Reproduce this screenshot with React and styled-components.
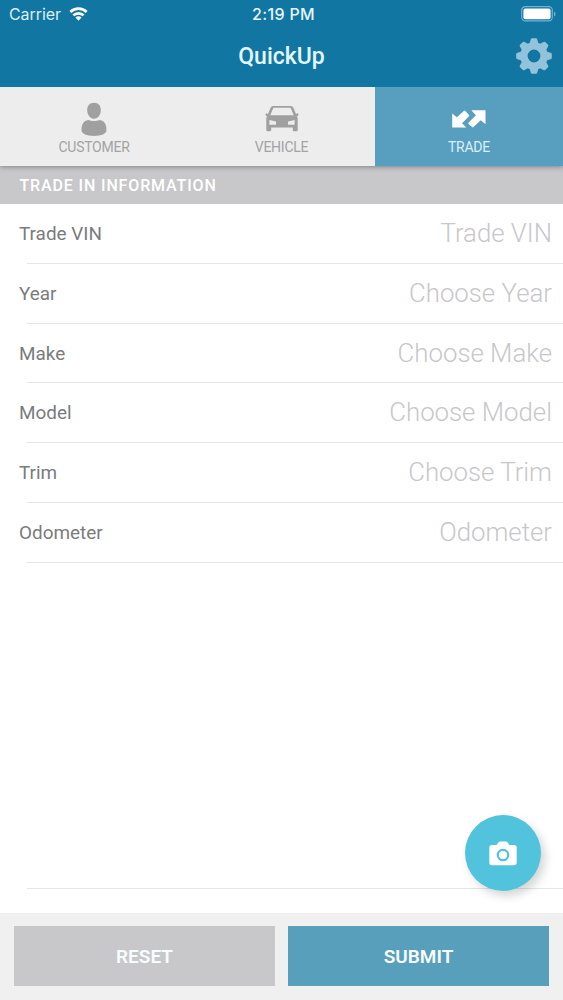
import styled, { createGlobalStyle } from "styled-components";

const fields = [
  { label: "Trade VIN", placeholder: "Trade VIN" },
  { label: "Year", placeholder: "Choose Year" },
  { label: "Make", placeholder: "Choose Make" },
  { label: "Model", placeholder: "Choose Model" },
  { label: "Trim", placeholder: "Choose Trim" },
  { label: "Odometer", placeholder: "Odometer" },
];

const WifiIcon = () => (
  <svg width="19" height="14" viewBox="0 0 20 15" fill="none" stroke="#fff" strokeWidth="2.9">
    <path d="M1.3 5.4a12.4 12.4 0 0 1 17.4 0" />
    <path d="M4.5 9a7.8 7.8 0 0 1 11 0" />
    <path d="M10 14.600 6.700 11.300a4.600 4.600 0 0 1 6.600 0z" fill="#fff" stroke="none" />
  </svg>
);

const BatteryIcon = () => (
  <svg width="35" height="16" viewBox="0 0 35 16">
    <rect x="0.7" y="0.7" width="30.6" height="14.2" rx="3.6" fill="none" stroke="#74b2d0" strokeWidth="1.2" />
    <rect x="2.4" y="2.4" width="27.2" height="10.8" rx="2" fill="#fff" />
    <path d="M33 5.4c2 .9 2 4.1 0 5z" fill="#74b2d0" />
  </svg>
);

const GearIcon = () => (
  <svg width="36" height="36" viewBox="-18 -18 36 36">
    <g fill="#92c3da">
      {[0, 45, 90, 135, 180, 225, 270, 315].map((angle) => (
        <path
          key={angle}
          transform={`rotate(${angle})`}
          d="M-4.7-11.5-3.3-16.6Q-3-17.8-2-17.8H2Q3-17.8 3.3-16.6L4.7-11.5z"
        />
      ))}
      <circle r="10.1" fill="none" stroke="#92c3da" strokeWidth="7.4" />
    </g>
  </svg>
);

const PersonIcon = () => (
  <svg width="26" height="34" viewBox="0 0 26 34" fill="#a0a0a1">
    <path d="M13 .8c4.200 0 6.800 2.800 6.800 7.300 0 4.800-2.900 8.700-6.800 8.700S6.200 12.900 6.200 8.100C6.200 3.600 8.800.8 13 .8z" />
    <path d="M7.500 17.900c3 1.500 8 1.500 11 0 5.300.5 7.300 5.300 6.900 10.700C25.200 31.800 20.500 34 13 34S.8 31.800.6 28.600C.2 23.200 2.200 18.400 7.500 17.900z" />
  </svg>
);

const CarIcon = () => (
  <svg width="34" height="26" viewBox="0 0 34 26" fill="#a0a0a1">
    <path
      fillRule="evenodd"
      d="M8.200 0h17.600q1.900 0 2.600 1.800L31 8l1.600-.8q1 .1.900 1.600-.1 1.500-1.600 1.400l.8 1.700V24q0 1.300-1.300 1.300h-2.300q-1.300 0-1.300-1.300v-2.400H6.200V24q0 1.300-1.300 1.300H2.600Q1.300 25.300 1.300 24V11.900l.8-1.700Q.6 10.300.5 8.800.4 7.300 1.400 7.200L3 8l2.600-6.200Q6.300 0 8.200 0zM8.400 1.700 5.300 9.300h23.400l-3.100-7.600zM4.400 14v4.800h6.600v-3.200zM29.600 14l-6.600 1.600v3.200h6.600z"
    />
  </svg>
);

const TradeIcon = () => (
  <svg width="34" height="18" viewBox="0 0 34 18" fill="#fff">
    <path d="M.2 3.500 4.800 7.300 11.800.9q.8-.6 1.500 0L17 4.900q.6.700 0 1.400L10 13.300l4.200 4.200H.2z" />
    <path d="M19.300.3h14.200v14l-4.700-4.100-7.300 6.900q-.7.600-1.400 0l-3.500-3.200q-.6-.7 0-1.400l7.300-7.300z" />
  </svg>
);

const CameraIcon = () => (
  <svg width="28" height="25" viewBox="0 0 28 25">
    <path
      d="M3 3.900h4.600l1.700-2.500Q10 .5 11.200.5h5.600q1.200 0 1.900.9l1.700 2.500H25q2.700 0 2.700 2.700v15q0 2.700-2.700 2.700H3Q.3 24.300.3 21.600v-15Q.3 3.900 3 3.900z"
      fill="#fff"
    />
    <circle cx="14" cy="14" r="5.200" fill="none" stroke="#51c3dd" strokeWidth="2.200" />
  </svg>
);

const App = () => {
  return (
    <Screen>
      <GlobalStyle />
      <Header>
        <StatusBar>
          <Carrier>
            Carrier
            <WifiIcon />
          </Carrier>
          <Clock>2:19 PM</Clock>
          <Battery>
            <BatteryIcon />
          </Battery>
        </StatusBar>
        <NavBar>
          <Title>QuickUp</Title>
          <SettingsButton aria-label="Settings">
            <GearIcon />
          </SettingsButton>
        </NavBar>
      </Header>
      <Tabs>
        <Tab>
          <TabIcon>
            <PersonIcon />
          </TabIcon>
          CUSTOMER
        </Tab>
        <Tab>
          <TabIcon>
            <CarIcon />
          </TabIcon>
          VEHICLE
        </Tab>
        <Tab $active>
          <TabIcon>
            <TradeIcon />
          </TabIcon>
          TRADE
        </Tab>
      </Tabs>
      <SectionTitle>TRADE IN INFORMATION</SectionTitle>
      <Form>
        {fields.map(({ label, placeholder }) => (
          <Field key={label}>
            <Label>{label}</Label>
            <Value>{placeholder}</Value>
          </Field>
        ))}
        <ListEnd />
        <CameraButton aria-label="Scan VIN">
          <CameraIcon />
        </CameraButton>
      </Form>
      <Footer>
        <ActionButton $color="#c8c8ca">RESET</ActionButton>
        <ActionButton $color="#589fbb">SUBMIT</ActionButton>
      </Footer>
    </Screen>
  );
};

export default App;

// Styled Components

const GlobalStyle = createGlobalStyle`
  * {
    box-sizing: border-box;
  }

  body {
    margin: 0;
    background: #fff;
    font-family: Roboto, sans-serif;
  }

  svg {
    display: block;
  }

  button {
    border: 0;
    padding: 0;
    font-family: inherit;
  }
`;

const Screen = styled.div`
  display: flex;
  flex-direction: column;
  width: 563px;
  height: 1000px;
  overflow: hidden;
`;

const Header = styled.header`
  height: 87px;
  background: #1176a2;
  color: #fff;
`;

const StatusBar = styled.div`
  display: grid;
  grid-template-columns: 1fr auto 1fr;
  align-items: center;
  height: 28px;
  padding: 0 7px 0 9px;
  font-family: Inter, sans-serif;
  font-size: 16px;
`;

const Carrier = styled.div`
  display: flex;
  align-items: center;
  gap: 8px;
  color: #d9f0f8;
  letter-spacing: -0.08px;

  svg {
    margin-top: -1px;
  }
`;

const Clock = styled.div`
  margin-left: 2px;
  color: #e6f7fc;
  font-size: 16px;
  font-weight: 500;
  letter-spacing: 0.35px;
`;

const Battery = styled.div`
  justify-self: end;
`;

const NavBar = styled.div`
  display: grid;
  grid-template-columns: 1fr auto 1fr;
  align-items: center;
  height: 56px;
  padding-right: 11px;
`;

const Title = styled.h1`
  grid-column: 2;
  margin: 0 0 0 11px;
  color: #e2f6fc;
  font-size: 23px;
  font-weight: 500;
`;

const SettingsButton = styled.button`
  justify-self: end;
  background: none;
`;

const Tabs = styled.nav`
  position: relative;
  display: grid;
  grid-template-columns: 188px 187px 188px;
  height: 79px;
  box-shadow: 0 1px 5px rgba(0, 0, 0, 0.35);
  clip-path: inset(0 0 -8px 0);
`;

const Tab = styled.div`
  display: flex;
  flex-direction: column;
  align-items: center;
  gap: 2px;
  padding-top: 14px;
  background: ${({ $active }) => ($active ? "#589fbf" : "#ededee")};
  color: ${({ $active }) => ($active ? "#d9f0f8" : "#a3a3a4")};
  font-size: 14px;
  line-height: 16px;
  letter-spacing: -0.25px;
`;

const TabIcon = styled.div`
  display: flex;
  align-items: center;
  height: 36px;
`;

const SectionTitle = styled.h2`
  margin: 0;
  padding-left: 19.5px;
  height: 38px;
  background: #c8c7c9;
  color: #fff;
  font-size: 16px;
  font-weight: 500;
  line-height: 39px;
  letter-spacing: 0.86px;
`;

const Form = styled.main`
  position: relative;
  flex: 1;
  display: flex;
  flex-direction: column;
  padding-bottom: 24px;
`;

const Field = styled.div`
  display: flex;
  align-items: center;
  justify-content: space-between;
  height: 59.75px;
  padding: 0 11px 0 19px;
  background: linear-gradient(#e5e5e6, #e5e5e6) 27px 100% / 100% 1px no-repeat;
`;

const Label = styled.span`
  padding-bottom: 0.5px;
  color: #7b7b7d;
  font-size: 18.900px;
`;

const Value = styled.span`
  padding-bottom: 1.5px;
  color: #c9c6cb;
  font-size: 25.800px;
  font-weight: 300;
`;

const ListEnd = styled.div`
  flex: 1;
  margin-left: 27px;
  border-bottom: 1px solid #e5e5e6;
`;

const CameraButton = styled.button`
  position: absolute;
  right: 22px;
  bottom: 22px;
  display: flex;
  align-items: center;
  justify-content: center;
  width: 76px;
  height: 76px;
  border-radius: 50%;
  background: #51c3dd;
  box-shadow: 4px 5px 10px rgba(0, 0, 0, 0.17);
`;

const Footer = styled.footer`
  display: flex;
  gap: 13px;
  height: 87px;
  padding: 13px 14px 14px;
  background: #f0f0f1;
`;

const ActionButton = styled.button`
  flex: 1;
  background: ${({ $color }) => $color};
  color: #f7fcfe;
  font-size: 19px;
  font-weight: 600;
`;
